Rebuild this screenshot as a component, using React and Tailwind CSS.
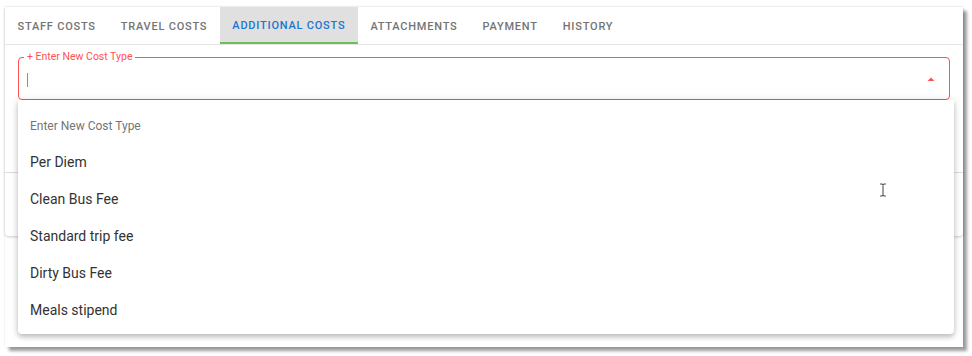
import { useState } from 'react';

const tabs = ['Staff Costs', 'Travel Costs', 'Additional Costs', 'Attachments', 'Payment', 'History'];
const costTypes = ['Per Diem', 'Clean Bus Fee', 'Standard trip fee', 'Dirty Bus Fee', 'Meals stipend'];

const App = () => {
    const [active] = useState(2);

    return (
        <div className="w-[972px] h-[356px] bg-white overflow-hidden" style={{ fontFamily: 'Roboto, "Liberation Sans", sans-serif' }}>
            <div className="relative ml-[5px] mt-[7px] w-[958px] h-[340px] bg-white shadow-[0_0_2px_rgba(0,0,0,0.12),4px_4px_3px_rgba(0,0,0,0.38)]">
                {/* Card with tabs */}
                <div className="h-[229px] rounded-b-[4px] shadow-[0_1px_3px_rgba(0,0,0,0.2)] flex flex-col">
                    <div className="flex h-[38px] border-b border-[#e4e4e4]">
                        {tabs.map((t, i) => (
                            <div key={t}
                                className={`flex items-center pt-[3px] px-[12.5px] text-[11px] uppercase tracking-[0.78px] font-medium ${i === active ? 'bg-[#e0e0e0] text-[#1976d2] border-b-2 border-[#6cc05a]' : 'text-[#747474]'}`}>
                                {t}
                            </div>
                        ))}
                    </div>
                    <div className="px-[13px] pt-[12px]">
                        {/* Outlined field */}
                        <div className="relative h-[43px] border-[1.5px] border-[#ff5252] rounded-[4px] flex items-center pl-[8px] pr-[14px]">
                            <span className="absolute left-[5px] top-[-8px] bg-white px-[3px] text-[10.5px] leading-[14px] text-[#ff5252]">+ Enter New Cost Type</span>
                            <span className="w-[1px] h-[14px] bg-[#e06b6b] mt-[2px]" />
                            <div className="flex-1" />
                            <svg width="10" height="6" viewBox="0 0 10 6" className="mt-[1px] mr-[-1px]">
                                <path d="M1.5 5 L5 1.5 L8.5 5 Z" fill="#ff5252" />
                            </svg>
                        </div>
                    </div>
                    <div className="flex-1" />
                    <div className="h-[64px] border-t border-[#dcdcdc]" />
                </div>

                {/* Dropdown menu */}
                <div className="absolute left-[13px] top-[93px] w-[936px] bg-white rounded-b-[4px] shadow-[0_3px_5px_rgba(0,0,0,0.2),0_1px_10px_rgba(0,0,0,0.12)] pt-[8px] pb-[5px]">
                    <div className="h-[36px] flex items-center px-[12px] text-[12px] text-[#757575]">Enter New Cost Type</div>
                    {costTypes.map(c => (
                        <div key={c} className="h-[37px] flex items-center px-[12px] text-[14px] text-[#333]">{c}</div>
                    ))}
                </div>

                {/* Mouse I-beam */}
                <svg className="absolute left-[874px] top-[176px]" width="8" height="14" viewBox="0 0 8 14">
                    <path d="M1 1 H3 L4 2 L5 1 H7 M4 2 V12 M1 13 H3 L4 12 L5 13 H7" stroke="#555" strokeWidth="1.1" fill="none" />
                </svg>
            </div>
        </div>
    );
};

export default App;
